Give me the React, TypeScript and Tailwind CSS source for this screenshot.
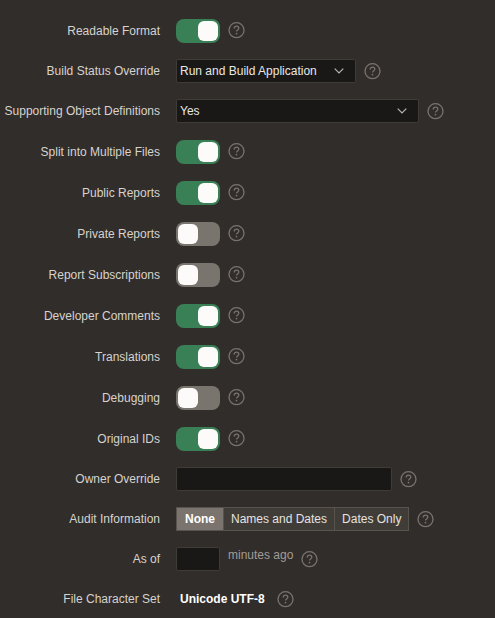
import { useId, useState } from "react";
import type { ReactNode } from "react";

function HelpButton({ topic }: { topic: string }) {
  return (
    <button type="button" aria-label={`Help: ${topic}`} className="mt-1 size-[17px] shrink-0 text-[#78736e]">
      <svg viewBox="0 0 17 17" fill="none" stroke="currentColor" strokeWidth="1.3" className="size-full">
        <circle cx="8.5" cy="8.2" r="7.5" />
        <path d="M6.2 6.4C6.2 5 7.2 4.2 8.5 4.2s2.3.8 2.3 2.1c0 1.6-2.3 1.7-2.3 3.2" />
        <circle cx="8.5" cy="11.6" r="0.9" fill="currentColor" stroke="none" />
      </svg>
    </button>
  );
}

const labelClass =
  "flex h-6 w-40 shrink-0 items-center justify-end whitespace-nowrap text-[#d6d3cf]";

function Row({ label, id, children }: { label: string; id?: string; children: ReactNode }) {
  return (
    <div className="flex items-start gap-4 py-2">
      {id ? (
        <label htmlFor={id} className={labelClass}>{label}</label>
      ) : (
        <span className={labelClass}>{label}</span>
      )}
      <div className="flex min-w-0 items-start gap-2">
        {children}
        <HelpButton topic={label} />
      </div>
    </div>
  );
}

function SwitchRow({ label, on = false }: { label: string; on?: boolean }) {
  const id = useId();
  const [checked, setChecked] = useState(on);
  return (
    <div className="flex items-end gap-4 py-2">
      <label htmlFor={id} className={labelClass}>{label}</label>
      <div className="flex items-start gap-2">
        <input
          id={id}
          type="checkbox"
          role="switch"
          checked={checked}
          onChange={(e) => setChecked(e.target.checked)}
          className="mt-px flex h-6 w-11 shrink-0 appearance-none rounded-lg bg-[#79746e] p-0.5 before:size-5 before:rounded-md before:bg-[#fcfbfa] before:content-[''] checked:justify-end checked:bg-[#3a8057]"
        />
        <HelpButton topic={label} />
      </div>
    </div>
  );
}

function SelectRow({ label, options, width }: { label: string; options: string[]; width: string }) {
  const id = useId();
  return (
    <Row label={label} id={id}>
      <div className={`relative ${width}`}>
        <select
          id={id}
          className="block h-6 w-full appearance-none rounded-xs border border-[#3f3b37] bg-[#191816] pr-7 pl-[3px] text-[#e9e7e4]"
        >
          {options.map((o) => (
            <option key={o}>{o}</option>
          ))}
        </select>
        <svg
          viewBox="0 0 10 6"
          fill="none"
          stroke="#b9b5b1"
          strokeWidth="1.2"
          className="pointer-events-none absolute top-[9px] right-3 h-1.5 w-2.5"
        >
          <path d="M0.7 0.7 5 5 9.3 0.7" />
        </svg>
      </div>
    </Row>
  );
}

function AuditRow() {
  const [value, setValue] = useState("None");
  return (
    <Row label="Audit Information">
      <div role="radiogroup" aria-label="Audit Information" className="flex h-6 border border-[#58534d] bg-[#403c38]">
        {["None", "Names and Dates", "Dates Only"].map((o) => (
          <label
            key={o}
            className="flex items-center border-l border-[#58534d] px-[7px] whitespace-nowrap text-[#e6e3e0] first:border-l-0 has-checked:bg-[#7b736e] has-checked:px-2 has-checked:font-bold has-checked:text-white"
          >
            <input
              type="radio"
              name="audit"
              value={o}
              checked={value === o}
              onChange={() => setValue(o)}
              className="sr-only"
            />
            {o}
          </label>
        ))}
      </div>
    </Row>
  );
}

export default function App() {
  return (
    <main className="min-h-screen overflow-x-hidden bg-[#312d2a] pt-2.5 font-['Liberation_Sans',sans-serif] text-xs">
      <form>
        <SwitchRow label="Readable Format" on />
        <SelectRow
          label="Build Status Override"
          options={["Run and Build Application", "Run Application Only"]}
          width="w-[180px]"
        />
        <SelectRow label="Supporting Object Definitions" options={["Yes", "No"]} width="w-[243px]" />
        <SwitchRow label="Split into Multiple Files" on />
        <SwitchRow label="Public Reports" on />
        <SwitchRow label="Private Reports" />
        <SwitchRow label="Report Subscriptions" />
        <SwitchRow label="Developer Comments" on />
        <SwitchRow label="Translations" on />
        <SwitchRow label="Debugging" />
        <SwitchRow label="Original IDs" on />
        <Row label="Owner Override" id="owner">
          <input
            id="owner"
            type="text"
            className="h-6 w-54 rounded-xs border border-[#3f3b37] bg-[#191816] px-1 text-[#e9e7e4]"
          />
        </Row>
        <AuditRow />
        <Row label="As of" id="as-of">
          <input
            id="as-of"
            type="text"
            className="h-6 w-11 rounded-xs border border-[#3f3b37] bg-[#191816] px-1 text-[#e9e7e4]"
          />
          <span className="whitespace-nowrap text-[#a19c97]">minutes ago</span>
        </Row>
        <Row label="File Character Set">
          <output className="flex h-6 items-center px-1 font-bold whitespace-nowrap text-white">Unicode UTF-8</output>
        </Row>
      </form>
    </main>
  );
}
